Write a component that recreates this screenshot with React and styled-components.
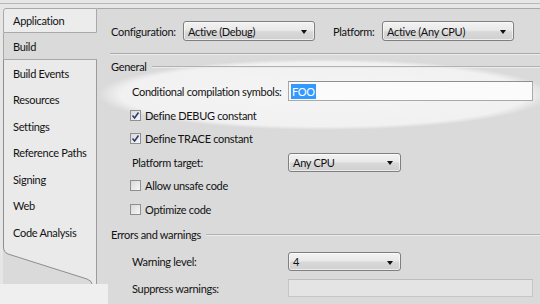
import React from 'react';
import styled, { createGlobalStyle } from 'styled-components';

const GlobalStyle = createGlobalStyle`
  html, body {
    margin: 0;
    padding: 0;
    background: #e6e6e6;
  }
  body {
    font-family: Lato, "Open Sans", sans-serif;
    font-size: 11px;
    letter-spacing: -0.3px;
    color: #121212;
    white-space: nowrap;
  }
`;

const Frame = styled.div`
  position: relative;
  width: 540px;
  height: 304px;
  overflow: hidden;
  background: #e6e6e6;
`;

const Edge = styled.div`
  height: 3px;
  border-bottom: 1px solid #b9b9b9;
`;

const Body = styled.div`
  display: flex;
  margin-top: 4px;
  height: 296px;
`;

const Sidebar = styled.div`
  width: 97px;
  flex: none;
  box-sizing: border-box;
  padding-left: 3px;
  display: flex;
  flex-direction: column;
`;

const AppTab = styled.div`
  height: 25px;
  box-sizing: border-box;
  display: flex;
  align-items: center;
  padding-left: 9px;
  background: #ececec;
  border: 1px solid #a9a9a9;
  border-top-left-radius: 3px;
`;

const ActiveTab = styled.div`
  height: 26px;
  box-sizing: border-box;
  display: flex;
  align-items: center;
  padding-left: 9px;
  background: #dadada;
  border-left: 1px solid #a9a9a9;
`;

const ListPanel = styled.div`
  position: relative;
  height: 225px;
  box-sizing: border-box;
  border-top: 1px solid #a9a9a9;
  border-right: 1px solid #9c9c9c;
  background: #dadada;
`;

const PanelShape = styled.svg`
  position: absolute;
  left: 0;
  top: 0;
  width: 93px;
  height: 224px;
`;

const TabItem = styled.div`
  position: relative;
  height: 26.5px;
  display: flex;
  align-items: center;
  padding-left: 10px;
`;

const Content = styled.div`
  position: relative;
  flex: 1;
  background: #dadada;
  border-top: 1px solid #a8a8a8;
`;

const Glow = styled.div`
  position: absolute;
  left: 1px;
  top: 50px;
  width: 452px;
  height: 71px;
  border-radius: 50%;
  background: radial-gradient(ellipse closest-side, #f5f5f5 0%, #f1f1f1 90%, rgba(218, 218, 218, 0) 100%);
`;

const Stack = styled.div`
  position: relative;
  z-index: 1;
  display: flex;
  flex-direction: column;
`;

const Toolbar = styled.div`
  height: 44px;
  display: grid;
  grid-template-columns: 72px 132px 67px 132px;
  align-items: center;
  padding-left: 14px;
`;

const ToolLabel = styled.span`
  padding-left: ${({ $indent }) => $indent || 0}px;
`;

const Rule = styled.div`
  height: 1px;
  margin-left: 13px;
  background: #a9a9a9;
  box-shadow: 0 1px 0 #ececec;
`;

const SectionHeader = styled.div`
  height: ${({ $h }) => $h}px;
  display: flex;
  align-items: center;
  gap: 5px;
  padding-left: 14px;

  &::after {
    content: "";
    flex: 1;
    height: 1px;
    background: #b2b2b2;
    box-shadow: 0 1px 0 #ebebeb;
  }
`;

const Row = styled.div`
  height: ${({ $h }) => $h}px;
  display: flex;
  align-items: center;
  padding-left: 35px;
`;

const FieldLabel = styled.span`
  width: 156px;
  flex: none;
`;

const Dropdown = styled.div`
  position: relative;
  width: ${({ $w }) => $w}px;
  height: ${({ $h }) => $h || 20}px;
  box-sizing: border-box;
  display: flex;
  align-items: center;
  padding-left: 4px;
  border: 1px solid #7f7f7f;
  border-radius: 3px;
  background: linear-gradient(#f3f3f3 0%, #e9e9e9 45%, #d8d8d8 55%, #d0d0d0 100%);
  box-shadow: inset 0 0 0 1px rgba(255, 255, 255, 0.6);

  &::after {
    content: "";
    position: absolute;
    right: 7px;
    top: 50%;
    margin-top: -1px;
    border-left: 3.5px solid transparent;
    border-right: 3.5px solid transparent;
    border-top: 4px solid #111;
  }
`;

const TextBox = styled.div`
  width: 245px;
  height: ${({ $h }) => $h}px;
  box-sizing: border-box;
  display: flex;
  align-items: center;
  padding-left: 2px;
  border: 1px solid ${({ $disabled }) => ($disabled ? '#c6c6c6' : '#a9a9a9')};
  border-top-color: ${({ $disabled }) => ($disabled ? '#bdbdbd' : '#8f8f8f')};
  background: ${({ $disabled }) => ($disabled ? '#e4e4e4' : '#fbfbfb')};
`;

const Selected = styled.span`
  background: #3399ff;
  color: #ffffff;
  padding: 1px 1px;
`;

const CheckRow = styled.label`
  display: flex;
  align-items: center;
  gap: 4px;
  margin-left: -2px;
`;

const Box = styled.span`
  width: 11px;
  height: 11px;
  box-sizing: border-box;
  border: 1px solid #8e8f8f;
  background: linear-gradient(135deg, #d8d8d8, #f7f7f7);
  display: flex;
  align-items: center;
  justify-content: center;
`;

const Corner = styled.div`
  position: absolute;
  left: 0;
  bottom: 0;
  width: 108px;
  height: 20px;
  background: #efefef;
  z-index: 2;
`;

const Checkbox = ({ checked, children }) => (
  <CheckRow>
    <Box>
      {checked && (
        <svg width="9" height="9" viewBox="0 0 9 9">
          <path d="M1.5 4.5 L3.6 7 L7.5 1.5" fill="none" stroke="#2a3772" strokeWidth="1.5" />
        </svg>
      )}
    </Box>
    <span>{children}</span>
  </CheckRow>
);

const tabs = [
  'Build Events',
  'Resources',
  'Settings',
  'Reference Paths',
  'Signing',
  'Web',
  'Code Analysis',
];

export default function App() {
  return (
    <>
      <GlobalStyle />
      <Frame>
        <Edge />
        <Body>
          <Sidebar>
            <AppTab>Application</AppTab>
            <ActiveTab>Build</ActiveTab>
            <ListPanel>
              <PanelShape viewBox="0 0 93 224">
                <path
                  d="M0.5 0 L0.5 187 Q0.5 192 5 194 L84 219 Q89 221 89 224 L93 224 L93 0 Z"
                  fill="#eaeaea"
                />
                <path
                  d="M0.5 0 L0.5 187 Q0.5 192 5 194 L84 219 Q89 221 89 224"
                  fill="none"
                  stroke="#8d8d8d"
                  strokeWidth="1"
                />
              </PanelShape>
              {tabs.map((t) => (
                <TabItem key={t}>{t}</TabItem>
              ))}
            </ListPanel>
          </Sidebar>

          <Content>
            <Glow />
            <Stack>
              <Toolbar>
                <ToolLabel>Configuration:</ToolLabel>
                <Dropdown $w={132}>Active (Debug)</Dropdown>
                <ToolLabel $indent={18}>Platform:</ToolLabel>
                <Dropdown $w={132}>Active (Any CPU)</Dropdown>
              </Toolbar>
              <Rule />

              <SectionHeader $h={24}>General</SectionHeader>
              <Row $h={26}>
                <FieldLabel>Conditional compilation symbols:</FieldLabel>
                <TextBox $h={20}>
                  <Selected>FOO</Selected>
                </TextBox>
              </Row>
              <Row $h={23}>
                <Checkbox checked>Define DEBUG constant</Checkbox>
              </Row>
              <Row $h={23}>
                <Checkbox checked>Define TRACE constant</Checkbox>
              </Row>
              <Row $h={24}>
                <FieldLabel>Platform target:</FieldLabel>
                <Dropdown $w={113} $h={19}>Any CPU</Dropdown>
              </Row>
              <Row $h={23}>
                <Checkbox>Allow unsafe code</Checkbox>
              </Row>
              <Row $h={24}>
                <Checkbox>Optimize code</Checkbox>
              </Row>

              <SectionHeader $h={27}>Errors and warnings</SectionHeader>
              <Row $h={27}>
                <FieldLabel>Warning level:</FieldLabel>
                <Dropdown $w={113} $h={19}>4</Dropdown>
              </Row>
              <Row $h={26}>
                <FieldLabel>Suppress warnings:</FieldLabel>
                <TextBox $h={18} $disabled />
              </Row>
            </Stack>
          </Content>
        </Body>
        <Corner />
      </Frame>
    </>
  );
}
